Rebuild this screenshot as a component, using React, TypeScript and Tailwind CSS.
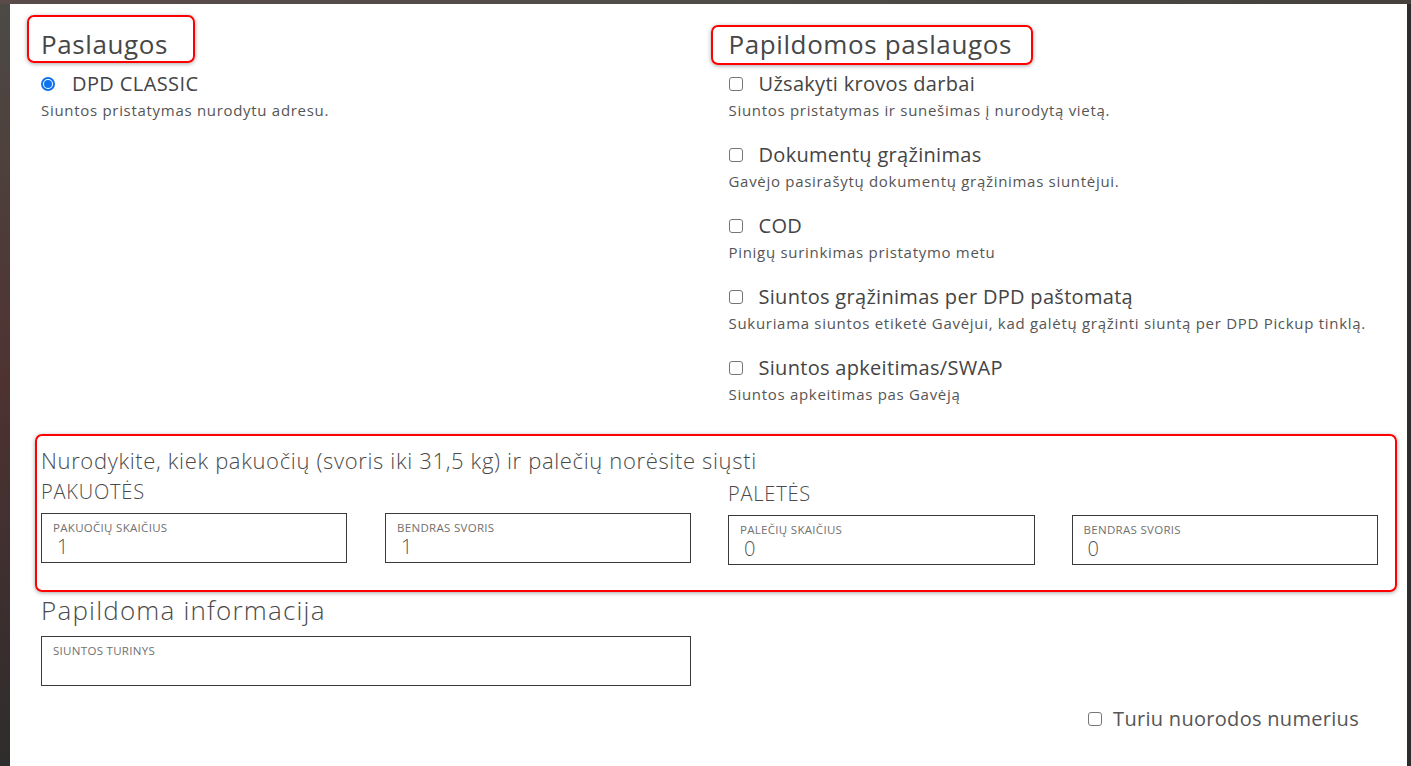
import React from 'react';

const services = [
  { title: 'Užsakyti krovos darbai', desc: 'Siuntos pristatymas ir sunešimas į nurodytą vietą.' },
  { title: 'Dokumentų grąžinimas', desc: 'Gavėjo pasirašytų dokumentų grąžinimas siuntėjui.' },
  { title: 'COD', desc: 'Pinigų surinkimas pristatymo metu' },
  { title: 'Siuntos grąžinimas per DPD paštomatą', desc: 'Sukuriama siuntos etiketė Gavėjui, kad galėtų grąžinti siuntą per DPD Pickup tinklą.' },
  { title: 'Siuntos apkeitimas/SWAP', desc: 'Siuntos apkeitimas pas Gavėją' },
];

const Box = () => (
  <span className="w-[14px] h-[14px] rounded-[3px] border border-[#767676] bg-white shrink-0" />
);

const Field: React.FC<{ label: string; value?: string }> = ({ label, value }) => (
  <div className="h-[50px] border border-[#3a3a3a] px-[11px] pt-[8px]">
    <div className="text-[11.5px] leading-[12px] text-[#707070] uppercase tracking-[0.3px]">{label}</div>
    {value !== undefined && (
      <div className="mt-[2px] text-[20px] leading-[21px] text-[#555] font-light pl-[4px]">{value}</div>
    )}
  </div>
);

const Marker: React.FC<{ className: string }> = ({ className }) => (
  <div
    className={`absolute border-2 border-[#ff0000] rounded-[7px] shadow-[0_1px_4px_rgba(0,0,0,0.35)] pointer-events-none ${className}`}
  />
);

const App: React.FC = () => {
  return (
    <div
      className="w-[1411px] h-[766px] overflow-hidden bg-[#2d2b2b] flex flex-col"
      style={{ fontFamily: '"Open Sans", "Liberation Sans", sans-serif' }}
    >
      <div className="h-[4px] bg-gradient-to-r from-[#5a4a4a] via-[#4f4d48] to-[#45403c] shrink-0" />
      <div className="flex flex-1 min-h-0">
        <div className="w-[10px] bg-gradient-to-b from-[#4c4a45] via-[#4e3232] to-[#2e2c2c] shrink-0" />
        <div className="relative w-[1397px] bg-white pl-[31px] pr-[29px] text-[#444]">
          <div className="grid grid-cols-2 gap-x-[38px]">
            <div>
              <h2 className="pt-[23px] text-[26px] leading-[34px] tracking-[0.6px] text-[#474747] font-normal">Paslaugos</h2>
              <div className="mt-[10px] flex items-center h-[26px]">
                <span className="w-[14px] h-[14px] rounded-full border-[2px] border-[#0b73ee] flex items-center justify-center">
                  <span className="w-[8px] h-[8px] rounded-full bg-[#0b73ee]" />
                </span>
                <span className="ml-[17px] text-[20px] leading-[26px] font-medium tracking-[0.4px] text-[#444]">DPD CLASSIC</span>
              </div>
              <p className="mt-[3px] text-[15px] leading-[20px] tracking-[0.7px] text-[#555]">Siuntos pristatymas nurodytu adresu.</p>
            </div>
            <div>
              <h2 className="pt-[23px] text-[26px] leading-[34px] tracking-[0.6px] text-[#474747] font-normal">Papildomos paslaugos</h2>
              <div className="mt-[10px] flex flex-col gap-[22px]">
                {services.map((s) => (
                  <div key={s.title}>
                    <div className="flex items-center h-[26px]">
                      <Box />
                      <span className="ml-[16px] text-[20px] leading-[26px] font-medium tracking-[0.3px] text-[#444]">{s.title}</span>
                    </div>
                    <p className="mt-[3px] text-[15px] leading-[20px] tracking-[0.7px] text-[#555]">{s.desc}</p>
                  </div>
                ))}
              </div>
            </div>
          </div>

          <h3 className="mt-[41px] text-[22px] leading-[30px] tracking-[0.65px] font-light text-[#4a4a4a]">
            Nurodykite, kiek pakuočių (svoris iki 31,5 kg) ir palečių norėsite siųsti
          </h3>
          <div className="grid grid-cols-2 gap-x-[37px]">
            <div>
              <div className="mt-[4px] text-[20px] leading-[26px] tracking-[0.8px] font-light text-[#4a4a4a]">PAKUOTĖS</div>
              <div className="mt-[8px] grid grid-cols-2 gap-x-[38px]">
                <Field label="Pakuočių skaičius" value="1" />
                <Field label="Bendras svoris" value="1" />
              </div>
            </div>
            <div>
              <div className="mt-[6px] text-[20px] leading-[26px] tracking-[0.8px] font-light text-[#4a4a4a]">PALETĖS</div>
              <div className="mt-[8px] grid grid-cols-2 gap-x-[37px]">
                <Field label="Palečių skaičius" value="0" />
                <Field label="Bendras svoris" value="0" />
              </div>
            </div>
          </div>

          <h3 className="mt-[28px] text-[26px] leading-[34px] tracking-[1.2px] font-light text-[#4a4a4a]">Papildoma informacija</h3>
          <div className="grid grid-cols-2 gap-x-[38px] mt-[9px]">
            <Field label="Siuntos turinys" />
          </div>

          <div className="flex justify-end pr-[19px] mt-[21px]">
            <div className="flex items-center h-[24px]">
              <Box />
              <span className="ml-[11px] text-[20px] leading-[24px] tracking-[0.3px] text-[#555]">Turiu nuorodos numerius</span>
            </div>
          </div>

          <Marker className="left-[17px] top-[11px] w-[168px] h-[48px]" />
          <Marker className="left-[701px] top-[21px] w-[322px] h-[40px]" />
          <Marker className="left-[25px] top-[430px] w-[1362px] h-[158px]" />
        </div>
        <div className="w-[4px] bg-[#2d2b2b] shrink-0" />
      </div>
    </div>
  );
};

export default App;
